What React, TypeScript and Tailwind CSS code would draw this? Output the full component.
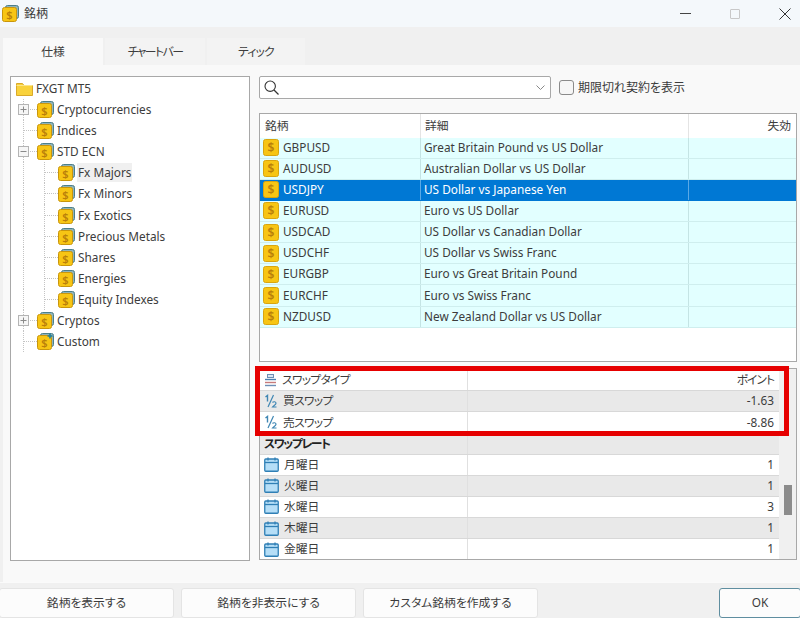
import React from "react";

const FONT = "font-['Noto_Sans','Noto_Sans_CJK_JP',sans-serif]";

type TreeNode = {
  label: string;
  level: 1 | 2;
  box?: "plus" | "minus";
  active?: boolean;
  last?: boolean;
  custom?: boolean;
};

const tree: TreeNode[] = [
  { label: "Cryptocurrencies", level: 1, box: "plus" },
  { label: "Indices", level: 1 },
  { label: "STD ECN", level: 1, box: "minus" },
  { label: "Fx Majors", level: 2, active: true },
  { label: "Fx Minors", level: 2 },
  { label: "Fx Exotics", level: 2 },
  { label: "Precious Metals", level: 2 },
  { label: "Shares", level: 2 },
  { label: "Energies", level: 2 },
  { label: "Equity Indexes", level: 2, last: true },
  { label: "Cryptos", level: 1, box: "plus" },
  { label: "Custom", level: 1, last: true, custom: true },
];

const symbols = [
  ["GBPUSD", "Great Britain Pound vs US Dollar"],
  ["AUDUSD", "Australian Dollar vs US Dollar"],
  ["USDJPY", "US Dollar vs Japanese Yen"],
  ["EURUSD", "Euro vs US Dollar"],
  ["USDCAD", "US Dollar vs Canadian Dollar"],
  ["USDCHF", "US Dollar vs Swiss Franc"],
  ["EURGBP", "Euro vs Great Britain Pound"],
  ["EURCHF", "Euro vs Swiss Franc"],
  ["NZDUSD", "New Zealand Dollar vs US Dollar"],
];

const days = [
  ["月曜日", "1"],
  ["火曜日", "1"],
  ["水曜日", "3"],
  ["木曜日", "1"],
  ["金曜日", "1"],
];

function CoinStack({ custom }: { custom?: boolean }) {
  return (
    <svg width="17" height="17" viewBox="0 0 17 17" className="shrink-0">
      <rect x="3.500" y="0.500" width="13" height="13" rx="2" fill="#8fb3b8" stroke="#4d7f8a" />
      <rect x="0.500" y="2.500" width="14" height="14" rx="2" fill="#f7c514" stroke="#c9960c" />
      <text x="7.500" y="13.500" textAnchor="middle" fontSize="11" fontWeight="600" fill="#b97f0a" fontFamily="Noto Sans">
        $
      </text>
      {custom && <path d="M13 0.500v5M10.500 3h5" stroke="#1f7f9c" strokeWidth="1.600" />}
    </svg>
  );
}

function Coin() {
  return (
    <svg width="16" height="17" viewBox="0 0 16 17" className="shrink-0">
      <rect x="0.500" y="0.500" width="15" height="16" rx="2" fill="#f7c514" stroke="#d9a50e" />
      <text x="8" y="13" textAnchor="middle" fontSize="12" fontWeight="600" fill="#b97f0a" fontFamily="Noto Sans">
        $
      </text>
    </svg>
  );
}

function Folder() {
  return (
    <svg width="17" height="14" viewBox="0 0 17 14" className="shrink-0">
      <path d="M0.500 1.500h6l1.500 2h8.500v10h-16z" fill="#f9d23c" stroke="#d9a92a" />
      <path d="M0.500 3.500h16" stroke="#fbe58a" />
    </svg>
  );
}

function ExpandBox({ type }: { type: "plus" | "minus" }) {
  return (
    <svg width="11" height="11" viewBox="0 0 11 11" className="bg-[#f6f6f6]">
      <rect x="0.500" y="0.500" width="10" height="10" fill="#f6f6f6" stroke="#b4b4b4" />
      <path d="M2.500 5.500h6" stroke="#8a8a8a" />
      {type === "plus" && <path d="M5.500 2.500v6" stroke="#8a8a8a" />}
    </svg>
  );
}

function Calendar() {
  return (
    <svg width="15" height="15" viewBox="0 0 15 15" className="shrink-0">
      <rect x="0.750" y="2" width="13.500" height="12.250" rx="1" fill="#b5def7" stroke="#2f7fb5" strokeWidth="1.300" />
      <path d="M1 5.500h13" stroke="#2f7fb5" strokeWidth="1.300" />
      <path d="M4 0.500v3M11 0.500v3" stroke="#2f7fb5" strokeWidth="1.300" />
    </svg>
  );
}

function Half() {
  return (
    <svg width="14" height="14" viewBox="0 0 14 14" className="shrink-0">
      <path d="M1.500 3l2-1.500v6" fill="none" stroke="#3f86b3" strokeWidth="1.400" />
      <path d="M9.500 1l-5.500 12" stroke="#3f86b3" strokeWidth="1.200" />
      <path d="M8.500 8.500c1-1.200 3.500-1 3.500.7 0 1.500-2.500 2.300-3.500 3.800h4" fill="none" stroke="#3f86b3" strokeWidth="1.200" />
    </svg>
  );
}

function SwapType() {
  return (
    <svg width="13" height="13" viewBox="0 0 13 13" className="shrink-0">
      <rect x="3.500" y="0.500" width="6" height="3" fill="#dbe6f2" stroke="#6d8fb5" />
      <path d="M1 5.500h11" stroke="#4c7fb0" strokeWidth="1.400" />
      <path d="M1 8.500h11" stroke="#c77b7b" strokeWidth="1.400" />
      <path d="M1 11.500h11" stroke="#6d8fb5" strokeWidth="1.400" />
    </svg>
  );
}

function TreeRow({ node }: { node: TreeNode }) {
  return (
    <div className="flex h-[21.100px] items-center relative">
      {/* outer guide */}
      <div className={`w-[8px] h-full shrink-0 border-r border-dotted border-[#c4c4c4] ${node.level === 1 && node.last ? "h-[11px] self-start" : ""}`} />
      {node.level === 1 ? (
        <div className="relative w-[13px] shrink-0 border-t border-dotted border-[#c4c4c4]">
          {node.box && (
            <div className="absolute left-[-6px] top-[-6px] flex">
              <ExpandBox type={node.box} />
            </div>
          )}
        </div>
      ) : (
        <>
          <div className={`w-[21px] shrink-0 h-full border-r border-dotted border-[#c4c4c4] ${node.last ? "h-[11px] self-start" : ""}`} />
          <div className={`w-[13px] shrink-0 border-t border-dotted border-[#c4c4c4] ${node.last ? "self-start mt-[10px]" : ""}`} />
        </>
      )}
      <CoinStack custom={node.custom} />
      <span className={`ml-[2px] px-[1px] leading-[19px] ${node.active ? "bg-[#f0f0f0]" : ""}`}>{node.label}</span>
    </div>
  );
}

function FooterButton({ label, className }: { label: string; className: string }) {
  return (
    <div className={`h-[30px] flex items-center justify-center bg-[#fcfcfc] border border-[#e4e4e4] rounded-[3px] ${className}`}>
      {label}
    </div>
  );
}

function PropRow({ icon, label, value, grey, bold }: { icon?: React.ReactNode; label: string; value?: string; grey?: boolean; bold?: boolean }) {
  const katakana = label.includes("スワップ");
  return (
    <div className={`flex h-[21.150px] border-b border-[#d8d8d8] ${grey ? "bg-[#e9e9e9]" : "bg-white"}`}>
      <div className="w-[208px] shrink-0 flex items-center pl-[4px] gap-[5px] border-r border-[#e0e0e0]">
        {icon}
        <span className={`${bold ? "font-bold text-[#222] tracking-[-1.400px]" : ""} ${katakana && !bold ? "tracking-[-0.700px]" : ""}`}>{label}</span>
      </div>
      <div className={`flex-1 flex items-center justify-end pr-[5px] ${value === "ポイント" ? "tracking-[-1px]" : ""}`}>{value}</div>
    </div>
  );
}

export default function App() {
  return (
    <div className={`w-[800px] h-[618px] overflow-hidden flex flex-col bg-[#f0f0f0] text-[11.800px] text-[#3c3c3c] [font-feature-settings:'palt'] ${FONT}`}>
      {/* title bar */}
      <div className="h-[27px] shrink-0 flex items-center bg-[#f4f8fb] pl-[2px]">
        <CoinStack />
        <span className="ml-[5px] text-[12px]">銘柄</span>
        <div className="ml-auto flex items-center pr-[9px] gap-[39px]">
          <div className="w-[11px] h-[1px] bg-[#444]" />
          <div className="w-[10px] h-[10px] border border-[#c8c8c8] rounded-[1px]" />
          <svg width="12" height="12" viewBox="0 0 12 12">
            <path d="M0.500 0.500l11 11M11.500 0.500l-11 11" stroke="#333" strokeWidth="1" />
          </svg>
        </div>
      </div>

      {/* tabs */}
      <div className="h-[38px] shrink-0 flex items-end pl-[3px] gap-[2px] bg-[#f0f0f0]">
        <div className="w-[100px] h-[27px] flex items-center justify-center bg-[#f9f9f9]">仕様</div>
        <div className="w-[100px] h-[27px] flex items-center justify-center bg-[#f3f3f3] tracking-[-1.500px]">チャートバー</div>
        <div className="w-[98px] h-[27px] flex items-center justify-center bg-[#f3f3f3] tracking-[-0.800px]">ティック</div>
      </div>

      {/* main panel */}
      <div className="h-[517px] shrink-0 ml-[3px] bg-[#f9f9f9] pt-[11px] pl-[7px] flex gap-[9px]">
        <div className="w-[240px] h-[485px] shrink-0 bg-white border border-[#a8a8a8] pl-[5px] pt-[1px] overflow-hidden">
          <div className="flex items-center h-[21px]">
            <Folder />
            <span className="ml-[3px]">FXGT MT5</span>
          </div>
          {tree.map((n) => (
            <TreeRow key={n.label} node={n} />
          ))}
        </div>

        <div className="w-[538px] shrink-0 flex flex-col relative">
          <div className="flex items-center h-[23px]">
            <div className="w-[292px] h-full bg-white border border-[#a8a8a8] rounded-[2px] flex items-center justify-between pl-[4px] pr-[5px]">
              <svg width="15" height="15" viewBox="0 0 15 15">
                <circle cx="6.200" cy="6.200" r="5.200" fill="none" stroke="#333" strokeWidth="1.100" />
                <path d="M10 10l4.500 4.500" stroke="#333" strokeWidth="1.300" />
              </svg>
              <svg width="9" height="6" viewBox="0 0 9 6">
                <path d="M0.500 0.500l4 4 4-4" fill="none" stroke="#888" />
              </svg>
            </div>
            <div className="ml-[8px] w-[15px] h-[15px] bg-[#f6f6f6] border border-[#8a8a8a] rounded-[3px]" />
            <span className="ml-[4px] text-[12px]">期限切れ契約を表示</span>
          </div>

          {/* symbols table */}
          <div className="mt-[14px] h-[249px] shrink-0 bg-white border border-[#a8a8a8] overflow-hidden">
            <div className="flex h-[23.500px] items-center bg-white">
              <div className="w-[161px] pl-[5px] border-r border-[#e4e4e4] h-full flex items-center">銘柄</div>
              <div className="w-[268px] pl-[4px] border-r border-[#e4e4e4] h-full flex items-center">詳細</div>
              <div className="flex-1 text-right pr-[5px]">失効</div>
            </div>
            {symbols.map(([name, desc]) => {
              const selected = name === "USDJPY";
              return (
                <div
                  key={name}
                  className={`flex h-[21.125px] border-b ${selected ? "bg-[#0078d4] text-white border-[#0078d4]" : "bg-[#e2ffff] border-[#cfeeee]"}`}
                >
                  <div className={`w-[161px] flex items-center pl-[3px] gap-[4px] border-r ${selected ? "border-[#5aa9e6]" : "border-[#c4e4e4]"}`}>
                    <Coin />
                    <span>{name}</span>
                  </div>
                  <div className={`w-[268px] flex items-center pl-[3px] border-r ${selected ? "border-[#5aa9e6]" : "border-[#c4e4e4]"}`}>{desc}</div>
                </div>
              );
            })}
          </div>

          {/* properties table */}
          <div className="mt-[6px] h-[192px] shrink-0 flex bg-[#f0f0f0] border border-[#a8a8a8] overflow-hidden">
            <div className="w-[519px] shrink-0 pt-[1px]">
              <PropRow icon={<SwapType />} label="スワップタイプ" value="ポイント" />
              <PropRow icon={<Half />} label="買スワップ" value="-1.63" grey />
              <PropRow icon={<Half />} label="売スワップ" value="-8.86" />
              <PropRow label="スワップレート" grey bold />
              {days.map(([day, v], i) => (
                <PropRow key={day} icon={<Calendar />} label={day} value={v} grey={i % 2 === 1} />
              ))}
            </div>
            <div className="flex-1 flex justify-center items-start pt-[116px]">
              <div className="w-[8px] h-[30px] bg-[#8c8c8c]" />
            </div>
          </div>

          {/* red highlight drawn over the rows */}
          <div className="absolute left-[-4px] top-[290px] w-[534px] h-[70px] border-[5px] border-[#e60000]" />
        </div>
      </div>

      {/* footer */}
      <div className="flex-1 flex items-start pt-[5px] border-t border-[#fafafa] bg-[#f0f0f0] relative">
        <FooterButton label="銘柄を表示する" className="w-[175px] ml-[-1px]" />
        <FooterButton label="銘柄を非表示にする" className="w-[175px] ml-[7px]" />
        <FooterButton label="カスタム銘柄を作成する" className="w-[175px] ml-[7px]" />
        <div className="ml-auto w-[82px] mr-[-1px] h-[30px] flex items-center justify-center bg-[#fcfcfc] border border-[#5f8ea0] rounded-[3px]">OK</div>
      </div>
    </div>
  );
}
